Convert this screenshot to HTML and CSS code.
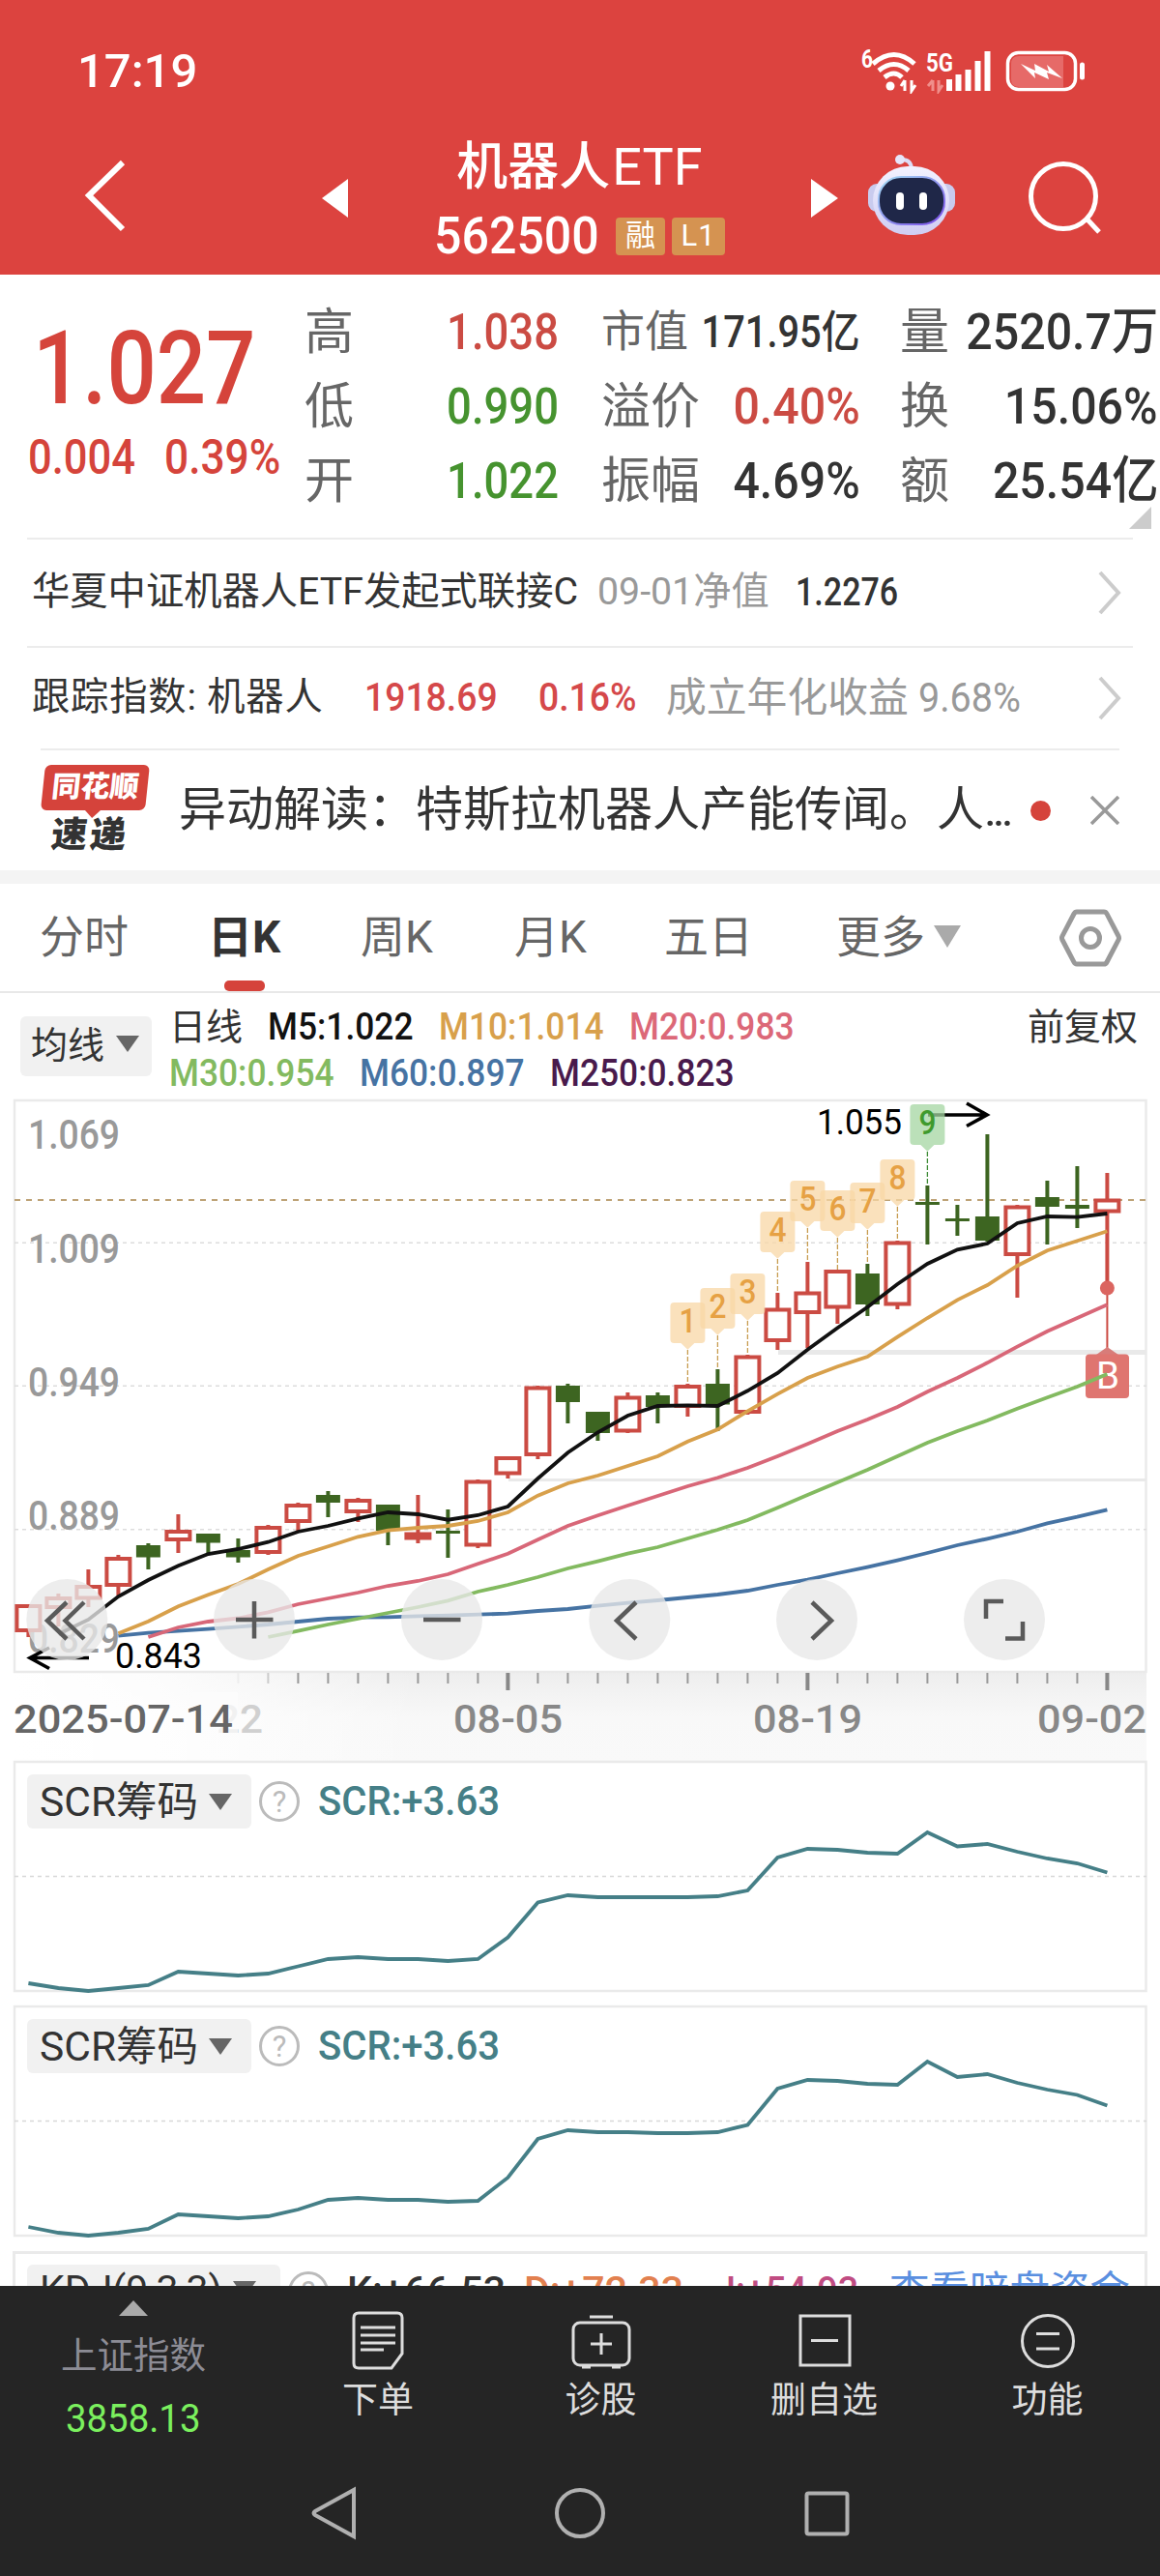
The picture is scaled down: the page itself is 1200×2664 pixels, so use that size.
FILE: index.html
```html
<!DOCTYPE html>
<html lang="zh-CN">
<head>
    <meta charset="UTF-8">
    <meta name="viewport" content="width=device-width, initial-scale=1.0">
    <title>机器人ETF 562500</title>
    <link rel="stylesheet" href="styles.css">
</head>
<body>
    <header class="top">
        <div class="status-bar">
            <span class="clock">17:19</span>
            <svg class="status-icons" width="236" height="46" viewBox="890 51 236 46">
                <text x="891" y="70" class="status-small" textLength="12" lengthAdjust="spacingAndGlyphs">6</text>
                <g fill="none" stroke="#fff" stroke-width="5">
                    <path d="M903 66 Q925 47 946 66"/>
                    <path d="M909 73 Q925 60 940 73"/>
                    <path d="M915 80 Q925 72 933 80"/>
                </g>
                <circle cx="921" cy="89" r="4.5" fill="#fff"/>
                <path d="M936 83v11M932 89l4-6M943 83v11l4-6" fill="none" stroke="#fff" stroke-width="3"/>
                <text x="958" y="74" class="status-small" textLength="28" lengthAdjust="spacingAndGlyphs">5G</text>
                <path d="M965 83v11M960 89l5-6M971 83v11l4-6" fill="none" stroke="#f08f8b" stroke-width="3"/>
                <path d="M982 82v12M991.500 77v17M1001.500 72v22M1011.500 63v31M1021.500 53v41" stroke="#fff" stroke-width="6"/>
                <rect x="1042.500" y="54.500" width="70" height="38" rx="11" fill="none" stroke="#fff" stroke-width="3.500"/>
                <path d="M1054 58H1100V90H1054Q1046 90 1046 82V66Q1046 58 1054 58Z" fill="#e66a68"/>
                <path d="M1056 66L1071 73L1070 66L1085 74L1083 67L1099 81L1083 75L1085 82L1070 75L1071 81Z" fill="#fff"/>
                <path d="M1119.500 67v13" stroke="#fff" stroke-width="5" stroke-linecap="round"/>
            </svg>
        </div>
        <div class="title-bar">
            <svg class="back" width="46" height="76" viewBox="86 164 46 76"><path d="M127 168L92 202L127 237" fill="none" stroke="#fff" stroke-width="6"/></svg>
            <svg class="prev" width="27" height="40" viewBox="0 0 27 40"><path d="M27 0V40L0 20Z" fill="#fff"/></svg>
            <div class="title">
                <div class="name">机器人<span class="name-latin">ETF</span></div>
                <div class="code-line">
                    <span class="code">562500</span>
                    <span class="tag">融</span>
                    <span class="tag tag-wide">L1</span>
                </div>
            </div>
            <svg class="next" width="28" height="40" viewBox="0 0 28 40"><path d="M0 0V40L28 20Z" fill="#fff"/></svg>
            <svg class="robot" width="92" height="84" viewBox="897 160 92 84">
                <defs>
                    <linearGradient id="shell" x1="0" y1="0" x2="0" y2="1">
                        <stop offset="0" stop-color="#f3f2ff"/>
                        <stop offset="1" stop-color="#cfcdf3"/>
                    </linearGradient>
                    <linearGradient id="rim" x1="0" y1="0" x2="1" y2="1">
                        <stop offset="0" stop-color="#a5dff5"/>
                        <stop offset="1" stop-color="#7a4ce8"/>
                    </linearGradient>
                </defs>
                <path d="M931 165Q942 164 943 174" fill="none" stroke="#dddcf6" stroke-width="4"/>
                <circle cx="931" cy="165" r="5" fill="#e6e5fa"/>
                <rect x="898" y="190" width="90" height="29" rx="9" fill="#c9cbee"/>
                <rect x="903" y="172" width="79" height="71" rx="36" fill="url(#shell)"/>
                <rect x="909" y="183" width="68" height="49" rx="23" fill="#1f2748" stroke="url(#rim)" stroke-width="2"/>
                <rect x="927" y="199" width="8" height="18" rx="4" fill="#fff"/>
                <rect x="951" y="199" width="8" height="18" rx="4" fill="#fff"/>
            </svg>
            <svg class="search" width="80" height="80" viewBox="1060 164 80 80"><g fill="none" stroke="#fff" stroke-width="5"><circle cx="1100" cy="203" r="33.500"/><path d="M1124 226L1137 240"/></g></svg>
        </div>
    </header>

    <section class="quote">
        <div class="price">
            <div class="last">1.027</div>
            <div class="change"><span>0.004</span><span class="pct">0.39%</span></div>
        </div>
        <div class="stats">
            <span class="k">高</span><span class="v red">1.038</span>
            <span class="k small">市值</span><span class="v mid">171.95亿</span>
            <span class="k">量</span><span class="v unit">2520.7万</span>
            <span class="k">低</span><span class="v green">0.990</span>
            <span class="k">溢价</span><span class="v unit red">0.40%</span>
            <span class="k">换</span><span class="v unit">15.06%</span>
            <span class="k">开</span><span class="v green">1.022</span>
            <span class="k">振幅</span><span class="v unit">4.69%</span>
            <span class="k">额</span><span class="v unit">25.54亿</span>
        </div>
        <i class="corner"></i>
    </section>

    <section class="links">
        <div class="link-row fund">
            <span>华夏中证机器人ETF发起式联接C</span>
            <span class="muted">09-01净值</span>
            <span class="n nav-value">1.2276</span>
            <svg class="chev" width="26" height="48" viewBox="0 0 26 48"><path d="M3 3L22 24L3 45" fill="none" stroke="#ccc" stroke-width="4"/></svg>
        </div>
        <div class="link-row index">
            <span class="track">跟踪指数: 机器人</span>
            <span class="n rise">1918.69</span>
            <span class="n rise">0.16%</span>
            <span class="muted big">成立年化收益</span>
            <span class="muted n light">9.68%</span>
            <svg class="chev" width="26" height="48" viewBox="0 0 26 48"><path d="M3 3L22 24L3 45" fill="none" stroke="#ccc" stroke-width="4"/></svg>
        </div>
        <div class="news">
            <div class="news-logo">
                <span class="logo-top">同花顺</span>
                <span class="logo-bottom">速递</span>
            </div>
            <span class="news-text">异动解读：特斯拉机器人产能传闻。人<span class="dots">...</span></span>
            <i class="dot"></i>
            <svg class="close" width="30" height="30" viewBox="0 0 30 30"><path d="M1 1L29 29M29 1L1 29" stroke="#999" stroke-width="3.500"/></svg>
        </div>
    </section>

    <nav class="tabs">
        <span>分时</span>
        <span class="active">日K</span>
        <span>周K</span>
        <span>月K</span>
        <span>五日</span>
        <span>更多<i class="caret"></i></span>
        <svg class="gear" width="64" height="60" viewBox="0 0 64 60"><path d="M18 3H46Q48 3 49 5L61 28Q62 30 61 32L49 55Q48 57 46 57H18Q16 57 15 55L3 32Q2 30 3 28L15 5Q16 3 18 3Z" fill="none" stroke="#999" stroke-width="5"/><circle cx="32" cy="30" r="9.500" fill="none" stroke="#999" stroke-width="5"/></svg>
    </nav>

    <section class="legend">
        <span class="chip ma-chip">均线<i class="caret dark"></i></span>
        <div class="ma-list">
            <div class="ma-row"><span class="day">日线</span><span class="m5">M5:1.022</span><span class="m10">M10:1.014</span><span class="m20">M20:0.983</span></div>
            <div class="ma-row"><span class="m30">M30:0.954</span><span class="m60">M60:0.897</span><span class="m250">M250:0.823</span></div>
        </div>
        <span class="adjust">前复权</span>
    </section>

    <svg class="kline" id="kline" width="1200" height="692" viewBox="0 1130 1200 692"></svg>

    <section class="panel">
        <div class="panel-head">
            <span class="chip">SCR筹码<i class="caret dark"></i></span>
            <i class="help">?</i>
            <span class="scr">SCR:+3.63</span>
        </div>
        <svg class="panel-line" id="scr1" width="1200" height="242" viewBox="0 1820 1200 242"></svg>
    </section>
    <section class="panel">
        <div class="panel-head">
            <span class="chip">SCR筹码<i class="caret dark"></i></span>
            <i class="help">?</i>
            <span class="scr">SCR:+3.63</span>
        </div>
        <svg class="panel-line" id="scr2" width="1200" height="242" viewBox="0 2073 1200 242"></svg>
    </section>
    <section class="panel cut">
        <div class="panel-head">
            <span class="chip kdj">KDJ(9,3,3)<i class="caret dark"></i></span>
            <i class="help">?</i>
            <span class="kv">K:+66.53</span>
            <span class="dv">D:+72.33</span>
            <span class="jv">J:+54.93</span>
            <span class="more">查看暗盘资金</span>
        </div>
    </section>

    <footer class="bottom">
        <div class="actions">
            <div class="index-box">
                <i class="up"></i>
                <span class="index-name">上证指数</span>
                <span class="index-value">3858.13</span>
            </div>
            <div class="action">
                <svg width="64" height="64" viewBox="0 0 64 64"><path d="M12 4H52Q57 4 57 9V46L46 61H12Q7 61 7 56V9Q7 4 12 4ZM14 19H50M14 27H50M14 35H50M14 42H38" class="ico"/></svg>
                <span>下单</span>
            </div>
            <div class="action">
                <svg width="64" height="64" viewBox="0 0 64 64"><rect x="3" y="14" width="58" height="44" rx="7" class="ico"/><path d="M20 8H44M32 25V47M21 36H43M12 60H21M43 60H52" class="ico"/></svg>
                <span>诊股</span>
            </div>
            <div class="action">
                <svg width="64" height="64" viewBox="0 0 64 64"><rect x="7" y="7" width="51" height="51" class="ico"/><path d="M18 32.500H46" class="ico"/></svg>
                <span>删自选</span>
            </div>
            <div class="action">
                <svg width="64" height="64" viewBox="0 0 64 64"><circle cx="32" cy="33" r="26.500" class="ico"/><path d="M20 25.500H44M20 41H44" class="ico"/></svg>
                <span>功能</span>
            </div>
        </div>
        <div class="sys-nav">
            <svg width="60" height="60" viewBox="0 0 60 60"><path d="M51 6V54L11 32Q8 30 11 28Z" class="nav-ico"/></svg>
            <svg width="60" height="60" viewBox="0 0 60 60"><circle cx="30" cy="30" r="24" class="nav-ico"/></svg>
            <svg width="60" height="60" viewBox="0 0 60 60"><rect x="9.500" y="9.500" width="42" height="42" rx="2" class="nav-ico"/></svg>
        </div>
    </footer>

    <script>
        const STEP = 31;
        const xAt = i => 29.4 + STEP * i;

        // type, body top, body bottom, high, low (r = hollow red, f = filled red, g = green)
        const candles = [
            ['r', 1659, 1688, 1659, 1693], ['r', 1651, 1664, 1648, 1682], ['r', 1639, 1654.5, 1623, 1662],
            ['r', 1610, 1641, 1608, 1650], ['g', 1598, 1610.5, 1596, 1623], ['r', 1582, 1594, 1566, 1606],
            ['g', 1586, 1595.5, 1586, 1608], ['g', 1603, 1610.5, 1591, 1616], ['r', 1578, 1607, 1577, 1608],
            ['r', 1555, 1575, 1554, 1583], ['g', 1546, 1554, 1542, 1569], ['r', 1550, 1565, 1549, 1574],
            ['g', 1556, 1583, 1556, 1598], ['f', 1584.5, 1592.5, 1546, 1596], ['g', 1583, 1586, 1561, 1611],
            ['r', 1530.5, 1599.5, 1530, 1601], ['r', 1506, 1525.5, 1506, 1529], ['r', 1433.5, 1506, 1433, 1509],
            ['g', 1433, 1450, 1431, 1472], ['g', 1460, 1482, 1460, 1490], ['r', 1443.5, 1481.5, 1440, 1482],
            ['g', 1443, 1455, 1440, 1472], ['r', 1432, 1456, 1431, 1465], ['g', 1431, 1452.5, 1416, 1480],
            ['r', 1401.5, 1462, 1401, 1463], ['r', 1352.5, 1388, 1337, 1396], ['r', 1335.5, 1359, 1305, 1394],
            ['r', 1313, 1353.5, 1313, 1369], ['g', 1317, 1349, 1307, 1361], ['r', 1283.5, 1350.5, 1283, 1354],
            ['g', 1243, 1246, 1226, 1287], ['g', 1260, 1263, 1246, 1278], ['g', 1258, 1283, 1173, 1284],
            ['r', 1246.5, 1299, 1246, 1342], ['g', 1238, 1248, 1221, 1287], ['g', 1246, 1250, 1206, 1270],
            ['r', 1239.5, 1254.5, 1213, 1332]
        ];

        const averages = [
            { color: '#4673a3', from: 3, y: [1691.7, 1688.7, 1686.7, 1684.7, 1682.3, 1680, 1677, 1674, 1672.7, 1672.3, 1671.3, 1670.7, 1669.7, 1668.7, 1666, 1664, 1660.7, 1657.7, 1655, 1652, 1649, 1645, 1639, 1633.7, 1627, 1620.7, 1613.7, 1606, 1598, 1591.3, 1584, 1575.3, 1568.7, 1561.3] },
            { color: '#83ba60', from: 8, y: [1693, 1686.7, 1680, 1674, 1668, 1662, 1655.3, 1646, 1639, 1631, 1622, 1614.7, 1606.7, 1600, 1591, 1582, 1572, 1559.3, 1546, 1533, 1520, 1506, 1492, 1480, 1469, 1456.7, 1445.3, 1434, 1421] },
            { color: '#d86778', from: 4, y: [1693, 1683, 1677, 1673.5, 1667.3, 1659, 1653, 1647, 1640, 1635, 1628, 1617.3, 1606.7, 1592.3, 1578, 1567.3, 1557, 1547, 1537, 1528.3, 1518, 1506, 1493.3, 1480, 1468, 1455, 1439.3, 1425, 1409.3, 1392.7, 1376.7, 1363, 1349.3] },
            { color: '#d8a04b', from: 3, y: [1689.3, 1676.7, 1661.3, 1649.3, 1638, 1623, 1609, 1599.3, 1589.3, 1582.7, 1580, 1578, 1573, 1564, 1546.7, 1534, 1526, 1516, 1506, 1490.7, 1478.3, 1459.3, 1441.7, 1425, 1413.3, 1403, 1382.7, 1363, 1344.3, 1329, 1309, 1293.3, 1283.3, 1273.3] },
            { color: '#111', from: 1, y: [1690, 1675, 1651, 1634, 1619.3, 1607, 1602, 1594.7, 1584, 1578, 1570.3, 1564, 1566, 1571.7, 1567, 1558, 1529, 1502.3, 1481.3, 1464, 1454, 1453.3, 1454, 1438.3, 1420, 1395.7, 1373.3, 1351.7, 1328, 1307, 1292.3, 1286, 1265, 1258, 1258.7, 1255] }
        ];

        // nine-turn markers: box top, end of the dashed leader
        const turns = [[1347, 1431], [1332, 1416], [1317, 1401], [1253, 1337], [1221, 1305], [1231, 1313], [1223, 1307], [1199, 1283], [1142, 1226]];

        const line = (x1, y1, x2, y2, color, w, dash) =>
            `<line x1="${x1}" y1="${y1}" x2="${x2}" y2="${y2}" stroke="${color}" stroke-width="${w}"${dash ? ` stroke-dasharray="${dash}"` : ''}/>`;
        const text = (x, y, str, len, cls) =>
            `<text x="${x}" y="${y}" class="${cls}" textLength="${len}" lengthAdjust="spacingAndGlyphs">${str}</text>`;
        const poly = (from, ys, color, w) =>
            `<polyline fill="none" stroke="${color}" stroke-width="${w}" points="${ys.map((y, i) => `${xAt(from + i)},${y}`).join(' ')}"/>`;

        function drawKline() {
            let s = '<defs><linearGradient id="axisV" x1="0" y1="0" x2="0" y2="1"><stop offset="0" stop-color="#eee"/><stop offset=".5" stop-color="#f8f8f8"/><stop offset="1" stop-color="#f9f9f9"/></linearGradient>'
                + '<linearGradient id="fade" x1="0" y1="0" x2="1" y2="0"><stop offset="0" stop-color="#fff"/><stop offset=".35" stop-color="#fff" stop-opacity=".85"/><stop offset="1" stop-color="#fff" stop-opacity="0"/></linearGradient></defs>';
            s += '<rect x="14" y="1730" width="1172" height="92" fill="url(#axisV)"/><rect x="14" y="1730" width="420" height="92" fill="url(#fade)"/>';
            s += '<rect x="15" y="1138" width="1170.500" height="591" fill="#fff" stroke="#eaeaea" stroke-width="2.500"/>';
            [1285.3, 1433.3, 1581.7].forEach(y => s += line(15, y, 1186, y, '#ddd', 1.5, '4 4'));
            s += line(15, 1241, 1186, 1241, '#bda276', 2, '6 6');
            s += line(805, 1398.5, 1186, 1398.5, '#e9e9e9', 5) + line(526, 1530.5, 1186, 1530.5, '#e9e9e9', 3);
            [['1.069', 1188], ['1.009', 1305.7], ['0.949', 1444], ['0.889', 1581.7], ['0.829', 1709.3]]
                .forEach(([t, y]) => s += text(29, y, t, 95, 'scale'));

            candles.forEach(([type, top, bottom, high, low], i) => {
                const x = xAt(i);
                const color = type === 'g' ? '#3d6521' : '#cb4b43';
                s += line(x, high, x, low, color, 4);
                if (type === 'r') {
                    s += `<rect x="${x - 12}" y="${top + 2}" width="24" height="${bottom - top - 4}" fill="#fff" stroke="${color}" stroke-width="4"/>`;
                } else {
                    const half = type === 'f' ? 14 : 12.5;
                    s += `<rect x="${x - half}" y="${top}" width="${half * 2}" height="${bottom - top}" fill="${color}"/>`;
                }
            });

            // buy point
            s += line(1145.4, 1332, 1145.4, 1394, '#cb4b43', 2);
            s += '<circle cx="1145.400" cy="1332" r="7.500" fill="#db6560"/>';
            s += '<path d="M1134 1401L1145.400 1393L1157 1401Z" fill="#d87c79"/><rect x="1123" y="1400.500" width="45" height="45.500" rx="4" fill="#df7570"/>';
            s += text(1134, 1435.5, 'B', 24, 'buy');

            averages.forEach(a => s += poly(a.from, a.y, a.color, 3.8));

            // period high and low
            s += text(845, 1172.5, '1.055', 88, 'extreme') + text(119, 1725.3, '0.843', 90, 'extreme');
            s += '<path d="M960 1153H1021M1000 1141L1021 1153L1000 1164.500M92 1714.500H31M51 1704L31 1714.500L51 1725.500" fill="none" stroke="#000" stroke-width="3.600"/>';

            turns.forEach(([top, end], i) => {
                const x = xAt(22 + i);
                const green = i === 8;
                const fill = green ? '#a4d6a1' : '#f8d7a5';
                s += line(x, top + 49, x, end, green ? '#3d8a35' : '#c79d50', 1.3, '5 2');
                s += `<path d="M${x - 14} ${top}h28q4 0 4 4v34q0 4 -4 4h-7l-7 6.700l-7 -6.700h-7q-4 0 -4 -4v-34q0 -4 4 -4z" fill="${fill}" fill-opacity=".75"/>`;
                s += text(x - 9, top + 31, i + 1, 18, green ? 'turn turn-green' : 'turn');
            });

            // floating controls
            [69.3, 263, 457, 651.3, 845, 1039].forEach(cx => s += `<circle cx="${cx}" cy="1675" r="42" fill="#e8e8e8" fill-opacity=".78"/>`);
            s += '<path d="M69 1657L49 1676L69 1695M87 1657L67.500 1676L87 1695M244 1675H282.500M263 1656V1694.500M438 1675H476.500M658 1657L638 1676L658 1695M840 1657L860 1676L840 1695M1038 1656H1020V1674M1058 1677V1694.500H1040" fill="none" stroke="#5a5a5a" stroke-width="4.500"/>';

            // date axis
            for (let i = 7; i < 37; i++) {
                const major = [16, 26, 36].includes(i);
                const color = major ? '#888' : i === 7 ? '#eee' : i === 8 ? '#ccc' : '#999';
                s += line(xAt(i), 1730, xAt(i), major ? 1748 : 1741, color, major ? 4 : 2);
            }
            s += text(224, 1791.5, '22', 48, 'date ghost') + '<rect x="200" y="1750" width="46" height="50" fill="#fcfcfc" fill-opacity=".75"/>';
            s += text(14, 1791.5, '2025-07-14', 227, 'date start');
            s += text(469, 1791.5, '08-05', 113, 'date') + text(779, 1791.5, '08-19', 113, 'date') + text(1073, 1791.5, '09-02', 113, 'date');
            document.getElementById('kline').innerHTML = s;
        }

        function drawScr(id, top, ys) {
            let s = `<rect x="15" y="${top}" width="1170.500" height="237" fill="none" stroke="#eaeaea" stroke-width="2.500"/>`;
            s += line(15, top + 118.5, 1186, top + 118.5, '#d8d8d8', 1.5, '4 4');
            s += poly(0, ys.map(y => top + y), '#457f87', 3.8);
            document.getElementById(id).innerHTML = s;
        }

        drawKline();
        drawScr('scr1', 1822, [229, 234, 237, 234, 231, 217, 219, 221, 219, 211.5, 204, 202, 204, 204, 206, 204, 181.5, 145.5, 138, 140, 140, 140, 140, 139, 133, 99, 90, 91, 94, 95, 73, 87.5, 85, 93, 100, 105, 114.5]);
        drawScr('scr2', 2075, [228, 234, 237, 234, 230, 215, 217, 219, 217, 210, 200, 198, 200, 200, 202, 201, 177, 137, 128, 130, 130, 131, 131, 130, 122.5, 85, 76, 77, 80, 81, 57, 73, 70, 79, 86, 91.5, 102.5]);
    </script>
</body>
</html>
```
FILE: styles.css
```css
* {
    box-sizing: border-box;
}

body {
    margin: 0;
    width: 1200px;
    height: 2664px;
    overflow: hidden;
    background: #fff;
    color: #333;
    font-family: Roboto, "Noto Sans CJK SC", sans-serif;
    line-height: 1.2;
    white-space: nowrap;
}

i {
    font-style: normal;
}

svg {
    display: block;
}

/* header */
.top {
    height: 284px;
    background: #dc433f;
    color: #fff;
}

.status-bar {
    display: flex;
    justify-content: space-between;
    padding: 51px 74px 0 80px;
    height: 139px;
}

.clock {
    font-size: 49px;
    line-height: 46px;
    font-weight: 500;
}

.status-small {
    font-size: 26px;
    font-weight: 700;
    fill: #fff;
}

.title-bar {
    display: flex;
    align-items: flex-start;
    padding-left: 86px;
}

.back {
    margin-top: 25px;
}

.prev {
    margin: 46px 0 0 201px;
}

.title {
    width: 479px;
    text-align: center;
}

.name {
    padding-top: 3px;
    height: 62px;
    font-size: 53px;
    line-height: 62px;
    font-weight: 500;
}

.name-latin {
    margin-left: 2px;
    font-size: 54px;
    font-weight: 400;
}

.code-line {
    display: flex;
    align-items: center;
    padding: 14px 0 0 89px;
    height: 72px;
}

.code {
    width: 188px;
    padding-top: 2px;
    text-align: left;
    font-size: 53px;
    font-weight: 500;
    transform: scaleX(.945);
    transform-origin: left;
}

.tag {
    width: 51px;
    height: 39px;
    margin-right: 7px;
    border-radius: 4px;
    background: #d59351;
    font-size: 31px;
    line-height: 38px;
    text-align: center;
}

.tag-wide {
    width: 55px;
    letter-spacing: 1px;
}

.next {
    margin-top: 46px;
}

.robot {
    margin: 21px 0 0 30px;
}

.search {
    margin: 25px 0 0 71px;
}

/* quote */
.quote {
    position: relative;
    display: flex;
    height: 272px;
    padding-top: 21px;
}

.price {
    width: 315px;
    padding-left: 34px;
    color: #d5443b;
}

.last {
    height: 143px;
    font-size: 105px;
    line-height: 154px;
    font-weight: 500;
    transform: scaleX(.86);
    transform-origin: left;
}

.change {
    display: flex;
    margin-left: -5px;
    font-size: 50px;
    line-height: 50px;
    font-weight: 500;
}

.change span {
    width: 141px;
    transform: scaleX(.87);
    transform-origin: left;
}

.change .pct {
    transform: scaleX(.885);
}

.stats {
    display: grid;
    grid-template-columns: 60px 203px 145px 167px 88px 220px;
    grid-auto-rows: 77px;
    width: 885px;
    line-height: 77px;
}

.k {
    font-size: 51px;
    color: #666;
}

.k:nth-child(6n+3) {
    padding-left: 44px;
}

.k:nth-child(6n+5) {
    padding-left: 41px;
}

.k.small {
    font-size: 45px;
}

/* condensed figures */
.v {
    justify-self: end;
    font-size: 52.5px;
    font-weight: 500;
    transform: scaleX(.865);
    transform-origin: right;
}

.v.unit {
    transform: scaleX(.92);
}

.v.mid {
    font-size: 46px;
}

.red {
    color: #cb4b43;
}

.green {
    color: #46932f;
}

.corner {
    position: absolute;
    right: 9px;
    top: 240px;
    border-left: 23px solid transparent;
    border-bottom: 23px solid #ccc;
}

/* fund, index, news */
.links {
    height: 358px;
    border-bottom: 14px solid #f4f4f4;
}

.link-row {
    display: grid;
    align-items: center;
    margin: 0 28px;
    padding-left: 5px;
    border-top: 2px solid #ececec;
    font-size: 39.3px;
}

.fund {
    height: 112px;
    grid-template-columns: 585px 205px 312px 26px;
}

.index {
    height: 106px;
    grid-template-columns: 344px 180px 132px 261px 185px 26px;
}

.track {
    letter-spacing: .8px;
}

.link-row .n {
    font-size: 41px;
    transform: scaleX(.91);
    transform-origin: left;
}

.link-row .nav-value {
    font-weight: 500;
    transform: scaleX(.83);
}

.link-row .light {
    font-size: 42px;
    transform: scaleX(.94);
}

.muted {
    color: #999;
}

.big {
    font-size: 41.8px;
}

.link-row .rise {
    color: #d5484a;
    font-weight: 500;
}

.news {
    display: flex;
    align-items: center;
    height: 126px;
    margin: 0 42px;
    border-top: 2px solid #ececec;
}

.news-logo {
    position: relative;
    width: 108px;
    height: 94px;
    margin-right: 35px;
    text-align: center;
    font-weight: 900;
    transform: skewX(-6deg);
}

.logo-top {
    position: relative;
    display: block;
    height: 47px;
    border-radius: 6px;
    background: #d5433b;
    color: #fff;
    font-size: 30px;
    line-height: 46px;
}

.logo-top::after {
    content: "";
    position: absolute;
    left: 45px;
    top: 46px;
    border: 9px solid transparent;
    border-top-color: #d5433b;
    border-bottom: 0;
}

.logo-bottom {
    display: block;
    font-size: 37px;
    line-height: 52px;
    letter-spacing: 3px;
}

.news-text {
    width: 882px;
    font-size: 49px;
}

.dots {
    letter-spacing: -4px;
}

.dot {
    width: 21px;
    height: 21px;
    border-radius: 50%;
    background: #d5433b;
}

.close {
    margin-left: 41px;
}

/* period tabs */
.tabs {
    display: grid;
    grid-template-columns: 174px 158px 159px 155px 178px 231px 64px;
    align-items: center;
    height: 113px;
    padding-left: 41px;
    border-bottom: 2px solid #e8e8e8;
    color: #666;
    font-size: 46px;
}

.tabs .active {
    position: relative;
    color: #333;
    font-weight: 700;
}

.tabs .active::after {
    content: "";
    position: absolute;
    left: 17px;
    bottom: -28px;
    width: 42px;
    height: 11px;
    border-radius: 5px;
    background: #d5433b;
}

.caret {
    display: inline-block;
    margin-left: 9px;
    vertical-align: 5px;
    border: 14px solid transparent;
    border-top: 23px solid #aaa;
    border-bottom: 0;
}

.caret.dark {
    margin-left: 12px;
    vertical-align: 6px;
    border-width: 17px 12px 0;
    border-top-color: #666;
}

/* moving average legend */
.legend {
    display: flex;
    height: 103px;
    padding: 11px 23px 0 21px;
    font-size: 38px;
}

.chip {
    border-radius: 6px;
    background: #f1f1f1;
}

.ma-chip {
    width: 136px;
    height: 62px;
    margin-top: 13px;
    padding-left: 11px;
    line-height: 60px;
}

.ma-list {
    flex: 1;
    padding-left: 18px;
}

.ma-row {
    display: flex;
    height: 48px;
    font-size: 39.5px;
    line-height: 48px;
    font-weight: 500;
}

.ma-row span {
    width: 197px;
    transform: scaleX(.895);
    transform-origin: left;
}

.ma-row .day {
    width: 102px;
    font-size: 38px;
    font-weight: 400;
    transform: none;
}

.ma-row .m5 {
    width: 177px;
    color: #111;
}

.m10 { color: #d8a04b; }
.m20 { color: #dc6878; }
.m30 { color: #83ba60; }
.m60 { color: #4673a3; }
.m250 { color: #491a4c; }

.adjust {
    line-height: 48px;
}

/* chart text */
.kline text {
    font-family: Roboto, sans-serif;
}

.scale {
    font-size: 42px;
    font-weight: 500;
    fill: #999;
}

.extreme {
    font-size: 36.5px;
    fill: #000;
}

.turn {
    font-size: 34.5px;
    font-weight: 500;
    fill: #e6a144;
}

.turn-green {
    fill: #3f9a2d;
}

.buy {
    font-size: 39px;
    fill: #fff;
}

.date {
    font-size: 41px;
    font-weight: 500;
    fill: #888;
}

.date.start {
    fill: #666;
}

.date.ghost {
    fill: #d0d0d0;
}

/* indicator panels */
.panel {
    position: relative;
    height: 253px;
}

.panel-line {
    position: absolute;
    left: 0;
    top: -2px;
}

.panel-head {
    display: flex;
    align-items: center;
    padding: 13px 0 0 28px;
    font-size: 41px;
}

.panel-head > * {
    flex-shrink: 0;
}

.panel .chip {
    width: 232px;
    height: 56px;
    padding-left: 13px;
    font-size: 42.5px;
    line-height: 57px;
}

.panel .chip .caret {
    margin-left: 11px;
}

.panel .chip.kdj {
    width: 262px;
    font-size: 41px;
    line-height: 53px;
}

.help {
    width: 42px;
    height: 42px;
    margin-left: 8px;
    border: 3px solid #bbb;
    border-radius: 50%;
    color: #bbb;
    font-size: 31px;
    line-height: 37px;
    text-align: center;
}

.scr {
    margin-left: 19px;
    color: #457f87;
    font-size: 42px;
    font-weight: 500;
    transform: scaleX(.955);
    transform-origin: left;
}

.panel.cut {
    height: 36px;
    margin: 0 13px;
    overflow: hidden;
    border: 3px solid #eaeaea;
    border-bottom: 0;
}

.cut .panel-head {
    padding: 11px 0 0 12px;
}

.kv,
.dv,
.jv {
    width: 183px;
    margin-left: 19px;
    font-weight: 500;
}

.dv {
    margin-left: 0;
    color: #e2804f;
}

.jv {
    width: 180px;
    margin-left: 15px;
    color: #c04c82;
    transform: scaleX(.92);
    transform-origin: left;
}

.more {
    color: #5a8fe0;
    font-size: 41.5px;
}

/* bottom bar */
.bottom {
    position: relative;
    height: 300px;
    background: #252525;
    color: #ddd;
}

.actions {
    display: grid;
    grid-template-columns: 276px 230px 231px 231px 231px;
    height: 205px;
}

.index-box,
.action {
    display: flex;
    flex-direction: column;
    align-items: center;
}

.action {
    padding-top: 24px;
    font-size: 37px;
    line-height: 62px;
}

.up {
    margin-top: 15px;
    border: 15px solid transparent;
    border-bottom: 16px solid #aaa;
    border-top: 0;
}

.index-name {
    margin-top: 14px;
    color: #8c8c95;
    font-size: 37.5px;
    line-height: 54px;
}

.index-value {
    margin-top: 13px;
    color: #7bf05e;
    font-size: 40px;
    line-height: 52px;
    transform: scaleX(.96);
}

.ico {
    fill: none;
    stroke: #ddd;
    stroke-width: 3;
}

.sys-nav {
    display: flex;
    gap: 195px;
    padding-left: 315px;
}

.nav-ico {
    fill: none;
    stroke: #b0b0b0;
    stroke-width: 4;
}
```
